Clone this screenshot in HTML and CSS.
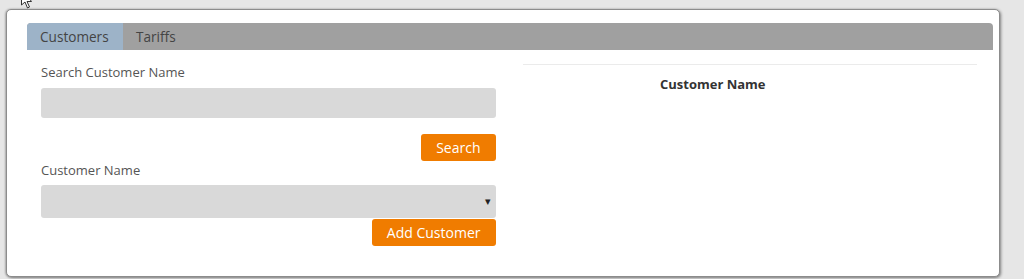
FILE: index.html
```html
<!DOCTYPE html>
<html lang="en">

<head>
    <meta charset="UTF-8">
    <meta name="viewport" content="width=device-width, initial-scale=1.0">
    <title>Customers</title>
    <link rel="stylesheet" href="styles.css">
</head>

<body>
    <!-- 鼠标指针 -->
    <svg class="cursor" width="14" height="10" viewBox="0 0 14 10">
        <path d="M1.5 -12 L1.5 5 L5 2 L7.5 8 L9.5 7 L7 1.5 L11.5 1.5 Z" fill="#fff" stroke="#333" stroke-width="1"/>
    </svg>

    <div class="panel">
        <div class="tabs">
            <a href="javascript:;" class="tab active">Customers</a>
            <a href="javascript:;" class="tab">Tariffs</a>
        </div>

        <div class="tab-content">
            <!-- 左侧：搜索 / 选择 -->
            <div class="form-col">
                <label class="field-label" for="search">Search Customer Name</label>
                <input type="text" id="search" class="field-input">
                <div class="btn-row">
                    <a href="javascript:;" class="btn">Search</a>
                </div>

                <label class="field-label second" for="customer">Customer Name</label>
                <div class="field-select">
                    <span class="arrow">&#9662;</span>
                </div>
                <div class="btn-row tight">
                    <a href="javascript:;" class="btn">Add Customer</a>
                </div>
            </div>

            <!-- 右侧：客户列表 -->
            <div class="list-col">
                <div class="list-head">Customer Name</div>
            </div>
        </div>
    </div>
</body>

</html>
```

FILE: styles.css
```css
* {
    margin: 0;
    padding: 0;
    box-sizing: border-box;
}

a {
    text-decoration: none;
}

body {
    background-color: #e6e6e6;
    font-family: "Open Sans", "Liberation Sans", sans-serif;
    font-size: 13px;
    color: #555;
    height: 279px;
    overflow: hidden;
    position: relative;
}

.cursor {
    position: absolute;
    left: 20px;
    top: 0;
}

/* 面板 */
.panel {
    margin: 9px 24px 0 6px;
    height: 268px;
    padding: 13px 6px 0 20px;
    background-color: #fff;
    border: 1px solid #8c8c8c;
    border-radius: 5px;
    box-shadow: 1px 1px 3px rgba(0, 0, 0, .45), -1px 0 2px rgba(0, 0, 0, .2);
}

/* 标签栏 */
.tabs {
    display: flex;
    height: 27px;
    background-color: #a0a0a0;
    border-radius: 4px 4px 0 0;
    overflow: hidden;
}

.tab {
    display: block;
    padding: 0 13px;
    line-height: 27px;
    font-size: 13.6px;
    color: #444;
}

.tab.active {
    background-color: #9db3c8;
    width: 96px;
}

/* 内容 */
.tab-content {
    display: grid;
    grid-template-columns: 1fr 1fr;
    column-gap: 27px;
    padding: 0 16px 0 14px;
}

.form-col {
    display: flex;
    flex-direction: column;
    padding-top: 13px;
}

.field-label {
    display: block;
    line-height: 18px;
    height: 18px;
    color: #555;
}

.field-label.second {
    margin-bottom: 6px;
}

.field-input {
    margin-top: 7px;
    width: 100%;
    height: 30px;
    border: none;
    border-radius: 3px;
    background-color: #d9d9d9;
    outline: none;
}

.field-select {
    position: relative;
    height: 33px;
    border-radius: 3px;
    background-color: #d9d9d9;
}

.field-select .arrow {
    position: absolute;
    right: 5px;
    top: 8px;
    font-size: 11px;
    color: #222;
}

.btn-row {
    display: flex;
    justify-content: flex-end;
    margin-top: 16px;
}

.btn-row.tight {
    margin-top: 1px;
}

.btn {
    display: block;
    padding: 0 15px;
    height: 27px;
    line-height: 27px;
    background-color: #f07c00;
    color: #fff;
    font-size: 14px;
    font-weight: 500;
    border-radius: 3px;
}

/* 列表 */
.list-col {
    margin-top: 14px;
    border-top: 1px solid #ebebeb;
}

.list-head {
    padding: 10px 74px 0 0;
    text-align: center;
    font-weight: bold;
    color: #333;
    font-size: 13px;
}
```
